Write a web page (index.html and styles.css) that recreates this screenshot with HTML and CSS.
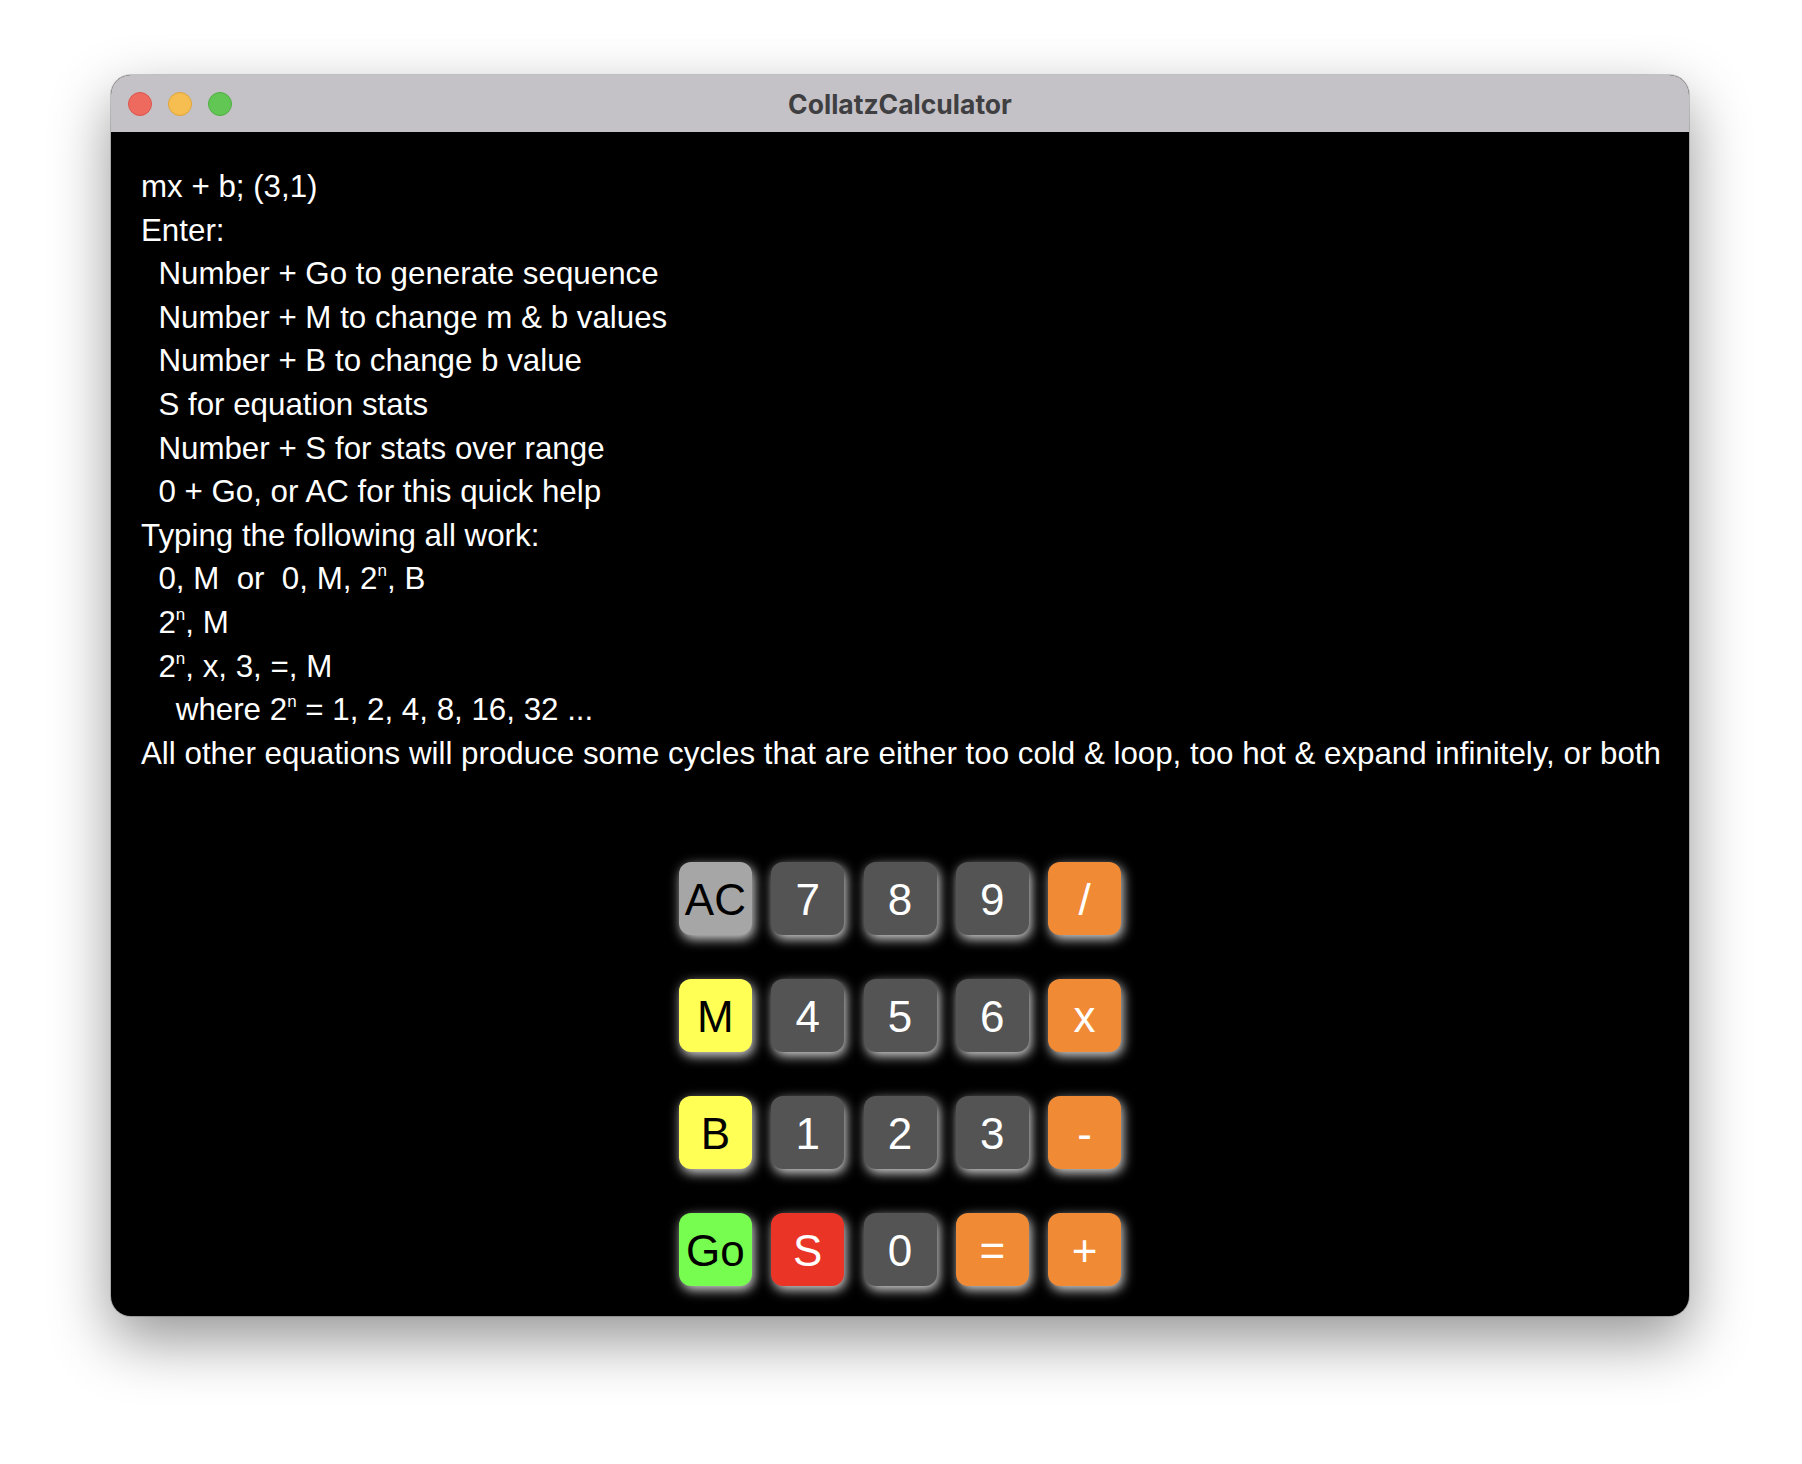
FILE: index.html
```html
<!DOCTYPE html>
<html>
<head>
<meta charset="utf-8">
<title>CollatzCalculator</title>
<link rel="stylesheet" href="styles.css">
</head>
<body>
<div class="window">
  <div class="titlebar">
    <div class="lights">
      <span class="light red"></span>
      <span class="light yellow"></span>
      <span class="light green"></span>
    </div>
    <div class="title">CollatzCalculator</div>
    <div class="spacer"></div>
  </div>
  <div class="content">
    <div class="help">
      <div class="line">mx + b; (3,1)</div>
      <div class="line">Enter:</div>
      <div class="line">  Number + Go to generate sequence</div>
      <div class="line">  Number + M to change m &amp; b values</div>
      <div class="line">  Number + B to change b value</div>
      <div class="line">  S for equation stats</div>
      <div class="line">  Number + S for stats over range</div>
      <div class="line">  0 + Go, or AC for this quick help</div>
      <div class="line">Typing the following all work:</div>
      <div class="line">  0, M  or  0, M, 2<sup class="sup">n</sup>, B</div>
      <div class="line">  2<sup class="sup">n</sup>, M</div>
      <div class="line">  2<sup class="sup">n</sup>, x, 3, =, M</div>
      <div class="line">    where 2<sup class="sup">n</sup> = 1, 2, 4, 8, 16, 32 ...</div>
      <div class="line">All other equations will produce some cycles that are either too cold &amp; loop, too hot &amp; expand infinitely, or both</div>
    </div>
    <div class="keypad">
      <div class="key light-grey">AC</div>
      <div class="key dark">7</div>
      <div class="key dark">8</div>
      <div class="key dark">9</div>
      <div class="key orange">/</div>

      <div class="key yellow-key">M</div>
      <div class="key dark">4</div>
      <div class="key dark">5</div>
      <div class="key dark">6</div>
      <div class="key orange">x</div>

      <div class="key yellow-key">B</div>
      <div class="key dark">1</div>
      <div class="key dark">2</div>
      <div class="key dark">3</div>
      <div class="key orange">-</div>

      <div class="key green-key">Go</div>
      <div class="key red-key">S</div>
      <div class="key dark">0</div>
      <div class="key orange">=</div>
      <div class="key orange">+</div>
    </div>
  </div>
</div>
</body>
</html>
```

FILE: styles.css
```css
html, body {
  margin: 0;
  padding: 0;
}

body {
  width: 1802px;
  height: 1464px;
  background: #ffffff;
  padding: 75px 0 0 111px;
  box-sizing: border-box;
  overflow: hidden;
  font-family: "Liberation Sans", Arial, sans-serif;
}

.window {
  width: 1578px;
  height: 1241px;
  border-radius: 20px;
  overflow: hidden;
  background: #000;
  box-shadow: 0 24px 60px rgba(0, 0, 0, 0.42), 0 0 0 1px rgba(0, 0, 0, 0.18);
  display: flex;
  flex-direction: column;
}

.titlebar {
  height: 57px;
  flex: 0 0 57px;
  background: #c4c2c7;
  display: grid;
  grid-template-columns: 1fr auto 1fr;
  align-items: center;
}

.lights {
  display: flex;
  gap: 16px;
  padding-left: 17px;
}

.light {
  width: 24px;
  height: 24px;
  border-radius: 50%;
  box-sizing: border-box;
}

.red {
  background: #ee6a5f;
  border: 1px solid #d9564b;
}

.yellow {
  background: #f6be50;
  border: 1px solid #dea43a;
}

.green {
  background: #62c655;
  border: 1px solid #50ac43;
}

.title {
  font-family: "Inter", "Liberation Sans", sans-serif;
  font-weight: 700;
  font-size: 26.5px;
  color: #3f3e41;
}

.content {
  flex: 1;
  padding: 33px 30px 0 30px;
  color: #ffffff;
}

.help {
  font-size: 31.3px;
  line-height: 43.6px;
}

.line {
  height: 43.6px;
  white-space: pre;
}

.sup {
  font-size: 17px;
  line-height: 0;
  vertical-align: 13px;
}

.keypad {
  margin-top: 87px;
  display: grid;
  grid-template-columns: repeat(5, 73px);
  grid-auto-rows: 73px;
  column-gap: 19.3px;
  row-gap: 44px;
  justify-content: center;
  margin-left: -30px;
  margin-right: -30px;
}

.key {
  border-radius: 12px;
  display: flex;
  align-items: center;
  justify-content: center;
  font-size: 44px;
  padding-top: 3px;
  box-sizing: border-box;
  box-shadow: 2px 4px 12px rgba(255, 255, 255, 0.85);
}

.light-grey {
  background: #a6a6a6;
  color: #000;
}

.dark {
  background: #545454;
  color: #fff;
}

.orange {
  background: #f08a35;
  color: #fff;
}

.yellow-key {
  background: #ffff55;
  color: #000;
}

.green-key {
  background: #77fd4f;
  color: #000;
}

.red-key {
  background: #e93426;
  color: #fff;
}
```
